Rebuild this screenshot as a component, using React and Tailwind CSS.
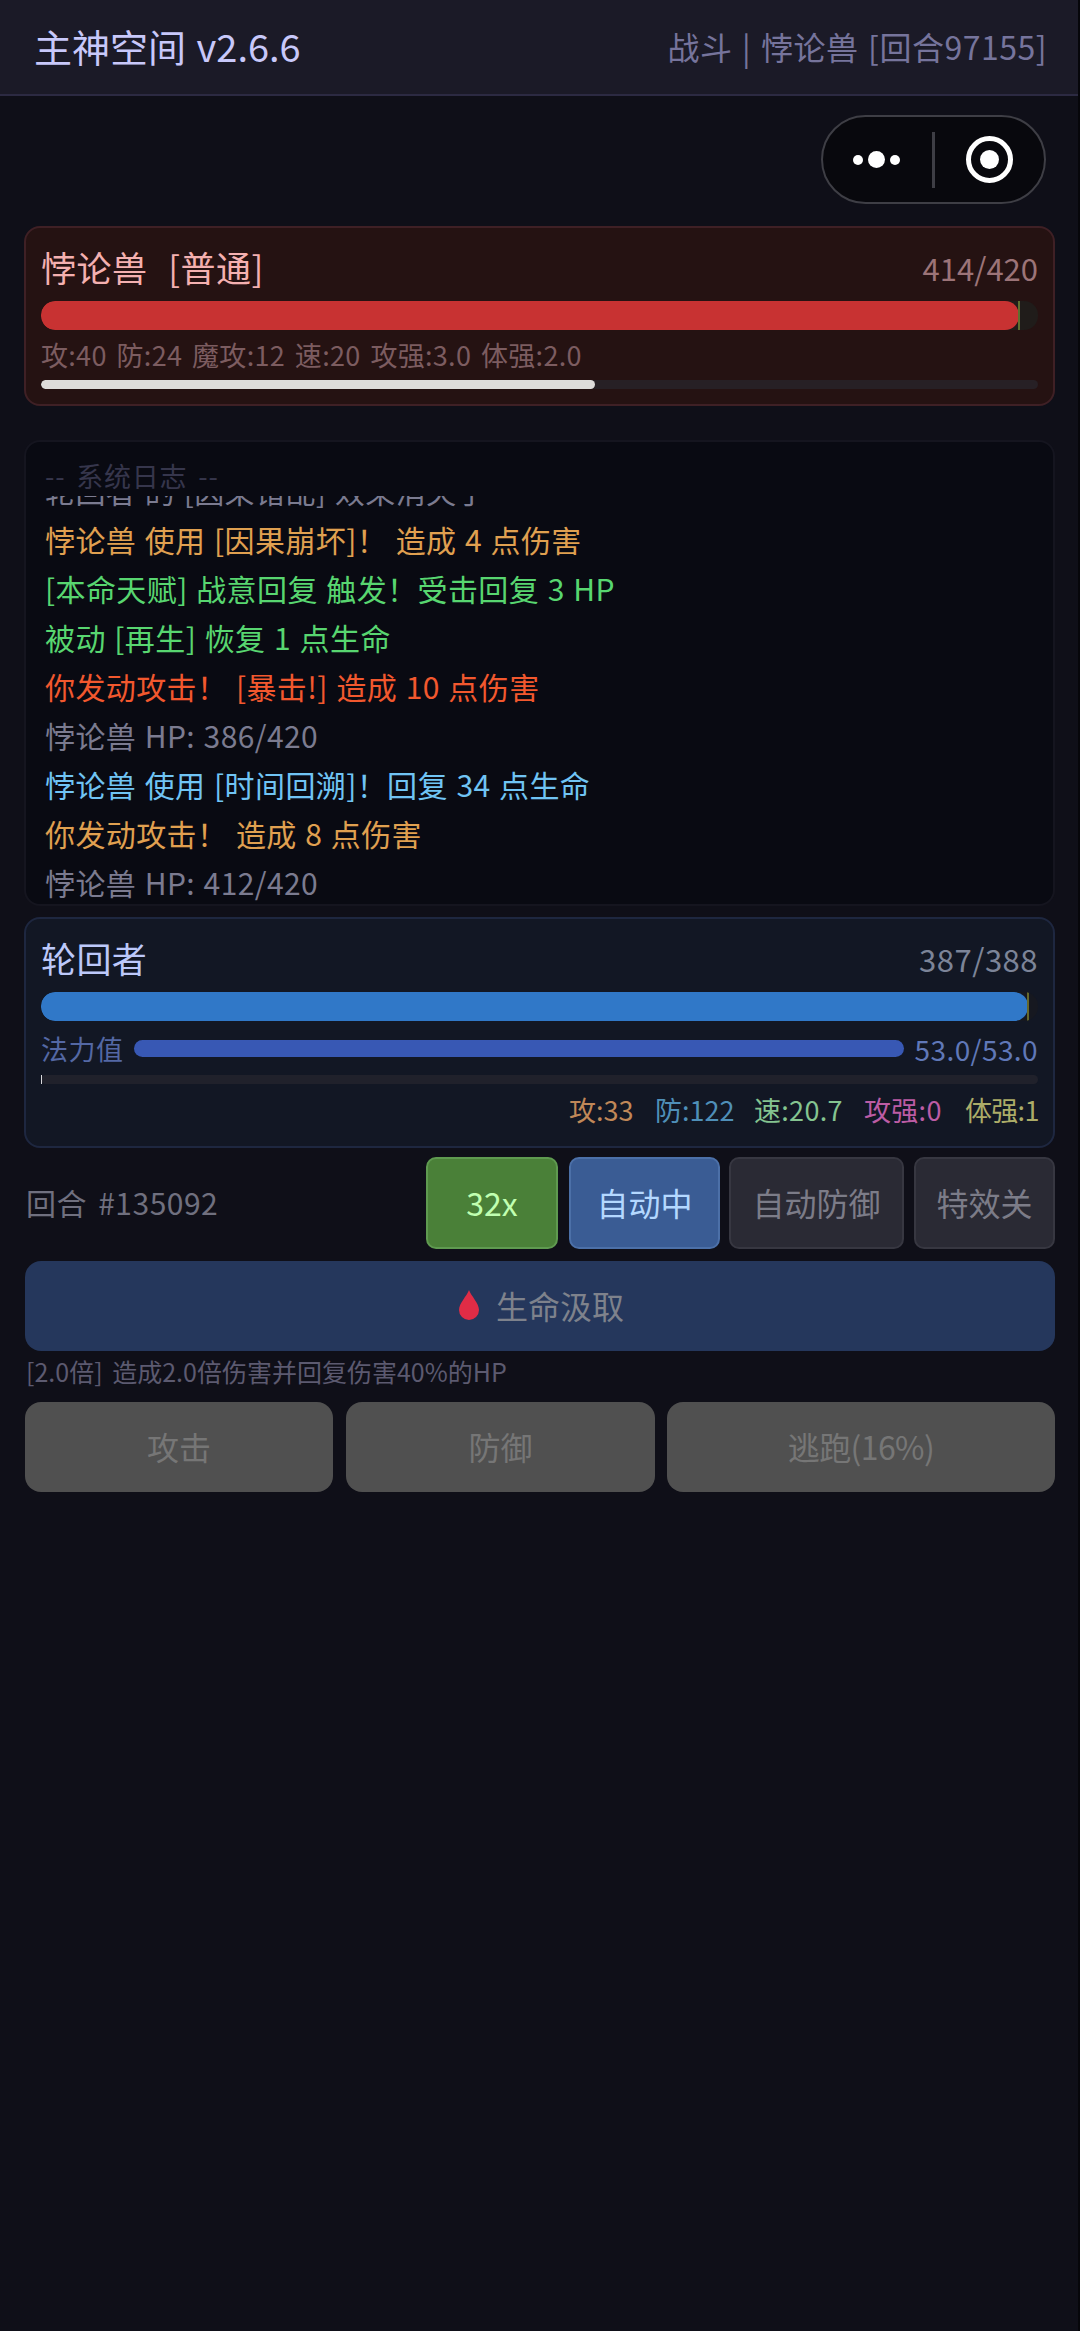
import React from "react";

const logs = [
  { text: "轮回者 的 [因果错乱] 效果消失了", color: "text-[#7b7b90]" },
  { text: "悖论兽 使用 [因果崩坏]！ 造成 4 点伤害", color: "text-[#e0a050]" },
  { text: "[本命天赋] 战意回复 触发！受击回复 3 HP", color: "text-[#58d670]" },
  { text: "被动 [再生] 恢复 1 点生命", color: "text-[#58d670]" },
  { text: "你发动攻击！ [暴击!] 造成 10 点伤害", color: "text-[#f2582e]" },
  { text: "悖论兽 HP: 386/420", color: "text-[#7b7b90]" },
  { text: "悖论兽 使用 [时间回溯]！回复 34 点生命", color: "text-[#70c4f4]" },
  { text: "你发动攻击！ 造成 8 点伤害", color: "text-[#e0a050]" },
  { text: "悖论兽 HP: 412/420", color: "text-[#7b7b90]" },
];

const playerStats = [
  { text: "攻:33", color: "text-[#c08858]", width: "w-[86px]" },
  { text: "防:122", color: "text-[#4f8fb8]", width: "w-[99px]" },
  { text: "速:20.7", color: "text-[#84c490] tracking-[0.3px]", width: "w-[110px]" },
  { text: "攻强:0", color: "text-[#bc5ca4] tracking-[0.3px]", width: "w-[101px]" },
  { text: "体强:1", color: "text-[#acac68] tracking-[-0.7px]", width: "w-[73px]" },
];

const toggles = [
  { text: "32x", style: "w-[132px] mr-[11px] bg-[#4a8038] border-[#5f9a50] text-[#c0ffb0]" },
  { text: "自动中", style: "w-[151px] mr-[9px] bg-[#3a5c94] border-[#4c70a8] text-[#b4d8ff]" },
  { text: "自动防御", style: "w-[175px] mr-[10px] bg-[#2a2a34] border-[#373741] text-[#7c7c88]" },
  { text: "特效关", style: "w-[141px] bg-[#2a2a34] border-[#373741] text-[#7c7c88]" },
];

const actions = [
  { text: "攻击", style: "w-[308px] mr-[13px]" },
  { text: "防御", style: "w-[309px] mr-3" },
  { text: "逃跑(16%)", style: "w-[388px] tracking-[-0.6px]" },
];

const Capsule = () => (
  <div className="w-[225px] h-[89px] rounded-full border-2 border-[#3e3e45] bg-[#08080d] flex items-center">
    <div className="w-[107px] mr-0.5 flex items-center justify-center gap-[5px]">
      <span className="w-[10px] h-[10px] rounded-full bg-white" />
      <span className="w-[17px] h-[17px] rounded-full bg-white" />
      <span className="w-[10px] h-[10px] rounded-full bg-white" />
    </div>
    <span className="w-[3px] h-14 bg-[#3e3e45]" />
    <div className="flex-1 flex items-center justify-center">
      <div className="w-[47px] h-[47px] rounded-full border-[5px] border-white flex items-center justify-center">
        <span className="w-[19px] h-[19px] rounded-full bg-white" />
      </div>
    </div>
  </div>
);

const HealthBar = ({ percent, fill, track, edge }) => (
  <div className={`flex h-[29px] rounded-[14px] overflow-hidden ${track}`}>
    <div className={`h-full rounded-[14px] ${fill}`} style={{ width: `${percent}%` }} />
    <div className={`h-full w-[2px] -ml-px ${edge}`} />
  </div>
);

const App = () => {
  return (
    <div className="min-h-[2331px] bg-[#0f0f18] border-r-2 border-[#06060a] whitespace-pre font-['Noto_Sans_CJK_SC',sans-serif]">
      <header className="h-24 pb-0.5 pl-[34px] pr-[31px] flex items-center justify-between bg-[#1b1a27] border-b-2 border-[#2c2a42]">
        <h1 className="text-[38px] leading-none [word-spacing:2px] text-[#c8c8fa]">主神空间 v2.6.6</h1>
        <span className="text-[32px] leading-none tracking-[0.5px] [word-spacing:2px] text-[#76749c]">
          战斗 | 悖论兽 [回合97155]
        </span>
      </header>

      <div className="h-[130px] pt-[19px] pr-8 flex justify-end">
        <Capsule />
      </div>

      <main className="ml-6 w-[1031px]">
        {/* enemy */}
        <section className="h-[180px] px-[15px] rounded-2xl border-2 border-[#3f2025] bg-[#251212]">
          <div className="h-[73px] pt-1 flex items-center justify-between">
            <span className="text-[35px] leading-none tracking-[0.5px] [word-spacing:2px] text-[#f4b0b0]">
              悖论兽  [普通]
            </span>
            <span className="pt-0.5 text-[31px] leading-none text-[#9c7478]">414/420</span>
          </div>
          <HealthBar percent={98.1} fill="bg-[#c83232]" track="bg-[#201c1a]" edge="bg-[#5c7030]" />
          <p className="h-[50px] leading-[50px] text-[27px] tracking-[0.3px] [word-spacing:3.5px] text-[#7c5c60]">
            攻:40 防:24 魔攻:12 速:20 攻强:3.0 体强:2.0
          </p>
          <div className="h-[9px] rounded-full bg-[#272025] overflow-hidden">
            <div className="h-full rounded-full bg-[#dedcda]" style={{ width: "55.6%" }} />
          </div>
        </section>

        {/* battle log */}
        <section className="mt-[34px] h-[466px] pl-[19px] rounded-2xl border-2 border-[#15151f] bg-[#090a12] overflow-hidden">
          <div className="h-[54px] pt-[13px] text-[27px] leading-[41px] tracking-[0.8px] [word-spacing:4px] text-[#36364c]">
            -- 系统日志 --
          </div>
          <div className="h-[411px] overflow-hidden flex flex-col justify-end">
            {logs.map((log, index) => (
              <p
                key={index}
                className={`h-[49px] shrink-0 text-[30px] leading-[49px] tracking-[0.4px] [word-spacing:1.4px] ${log.color}`}
              >
                {log.text}
              </p>
            ))}
          </div>
        </section>

        {/* player */}
        <section className="mt-[11px] h-[231px] px-[15px] rounded-2xl border-2 border-[#1e2740] bg-[#121724]">
          <div className="h-[73px] pt-1 flex items-center justify-between">
            <span className="text-[35px] leading-none tracking-[0.4px] text-[#bcc8fa]">轮回者</span>
            <span className="pt-px text-[31px] leading-none tracking-[0.5px] text-[#7c8498]">387/388</span>
          </div>
          <HealthBar percent={99} fill="bg-[#3078c8]" track="bg-[#161820]" edge="bg-[#66682c]" />
          <div className="h-[54px] pt-px flex items-center justify-between">
            <span className="text-[27px] leading-none tracking-[0.5px] text-[#5468a4]">法力值</span>
            <div className="w-[770px] h-[17px] rounded-full bg-[#3858b4]" />
            <span className="text-[28px] leading-none tracking-[0.4px] text-[#6078b8]">53.0/53.0</span>
          </div>
          <div className="h-[9px] rounded-full bg-[#20212b]">
            <div className="w-px h-full bg-[#d8d8dc]" />
          </div>
          <div className="h-[52px] pb-0.5 flex justify-end items-center text-[27px] leading-none">
            {playerStats.map((stat) => (
              <span key={stat.text} className={`${stat.color} ${stat.width}`}>
                {stat.text}
              </span>
            ))}
          </div>
        </section>

        <div className="mt-[9px] h-[92px] flex items-center">
          <span className="flex-1 pb-0.5 pl-0.5 text-[30px] leading-none tracking-[0.5px] [word-spacing:4px] text-[#70707f]">
            回合 #135092
          </span>
          {toggles.map((toggle) => (
            <button
              key={toggle.text}
              className={`h-full pb-[3px] rounded-[10px] border-2 text-[32px] leading-none ${toggle.style}`}
            >
              {toggle.text}
            </button>
          ))}
        </div>

        <button className="mt-3 w-[1030px] h-[90px] ml-px pl-[3px] pb-[3px] rounded-2xl bg-[#25375c] flex items-center justify-center text-[32px] leading-none text-[#7e828c]">
          <svg className="w-5 h-[30px] mr-[17px]" viewBox="0 0 20 30">
            <path d="M10 0C8 6 0 13 0 20a10 10 0 0 0 20 0C20 13 12 6 10 0Z" fill="#e02c46" />
          </svg>
          生命汲取
        </button>
        <p className="h-[51px] pl-0.5 leading-[41px] text-[25px] [word-spacing:4px] text-[#5c5a70]">
          [2.0倍] 造成2.0倍伤害并回复伤害40%的HP
        </p>

        <div className="ml-px flex">
          {actions.map((action) => (
            <button
              key={action.text}
              className={`h-[90px] pb-[3px] rounded-2xl bg-[#505050] text-[32px] leading-none text-[#767676] ${action.style}`}
            >
              {action.text}
            </button>
          ))}
        </div>
      </main>
    </div>
  );
};

export default App;
